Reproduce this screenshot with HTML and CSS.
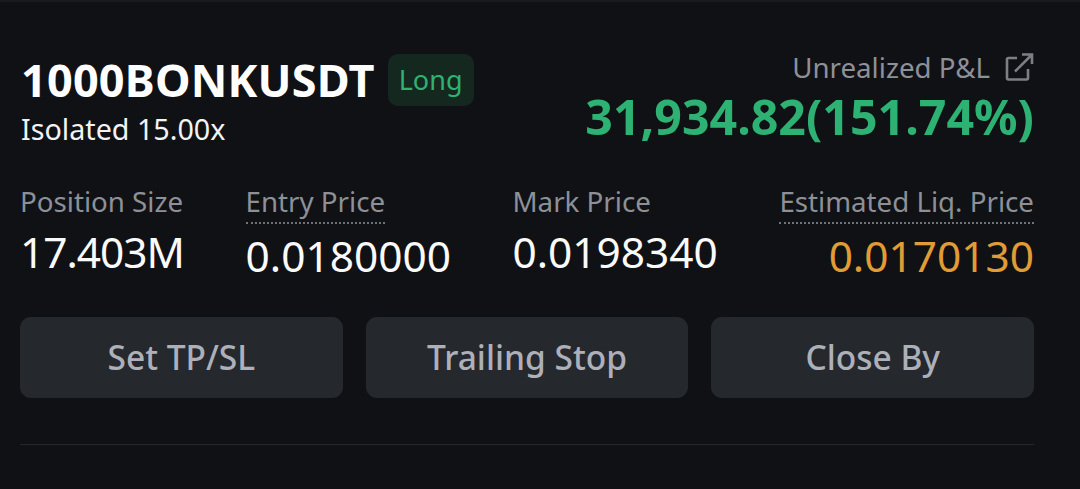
FILE: index.html
```html
<!DOCTYPE html>
<html>
<head>
<meta charset="utf-8">
<title>Position</title>
<link rel="stylesheet" href="styles.css">
</head>
<body>
<div class="card">
  <div class="head">
    <div class="symbol">
      <div class="symbol-row">
        <span class="name">1000BONKUSDT</span>
        <span class="tag">Long</span>
      </div>
      <div class="margin">Isolated 15.00x</div>
    </div>
    <div class="pnl">
      <div class="pnl-label">
        <span>Unrealized P&amp;L</span>
        <svg class="share" width="30" height="30" viewBox="0 0 30 30" fill="none" stroke="#7d7f85" stroke-width="2.600">
          <path d="M13 6H4.500A1.500 1.500 0 0 0 3 7.500V26A1.500 1.500 0 0 0 4.500 27.500H22.500A1.500 1.500 0 0 0 24 26V17"/>
          <path d="M11 19.500L27.500 3M18 2.500H28V12"/>
        </svg>
      </div>
      <div class="pnl-value">31,934.82(151.74%)</div>
    </div>
  </div>

  <div class="stats">
    <div class="stat">
      <div class="label">Position Size</div>
      <div class="value size">17.403M</div>
    </div>
    <div class="stat">
      <div class="label dotted">Entry Price</div>
      <div class="value">0.0180000</div>
    </div>
    <div class="stat">
      <div class="label">Mark Price</div>
      <div class="value">0.0198340</div>
    </div>
    <div class="stat right">
      <div class="label dotted">Estimated Liq. Price</div>
      <div class="value liq">0.0170130</div>
    </div>
  </div>

  <div class="actions">
    <button class="btn">Set TP/SL</button>
    <button class="btn">Trailing Stop</button>
    <button class="btn">Close By</button>
  </div>

  <div class="rule"></div>
</div>
</body>
</html>
```

FILE: styles.css
```css
html, body { margin: 0; padding: 0; height: 100%; }
body {
  background: #101115;
  color: #fff;
  font-family: "Noto Sans", Roboto, sans-serif;
  overflow: hidden;
}
.card {
  height: 489px;
  box-sizing: border-box;
  border-top: 2px solid #1a1b20;
  padding: 51px 46px 0 20px;
}
.head { display: flex; justify-content: space-between; height: 96px; }
.symbol { padding-left: 1px; }
.symbol-row { display: flex; align-items: center; gap: 13px; }
.name { font-size: 45px; font-weight: 700; line-height: 54px; letter-spacing: 0.2px; white-space: nowrap; }
.tag {
  background: #15281f;
  color: #2fb170;
  border-radius: 10px;
  font-size: 27px;
  line-height: 52px;
  padding: 0 11px;
}
.margin { font-size: 28.700px; line-height: 34px; margin-top: 5px; color: #f3f3f4; white-space: nowrap; }
.pnl { text-align: right; }
.pnl-label {
  display: flex;
  justify-content: flex-end;
  align-items: center;
  gap: 14px;
  height: 28px;
  color: #8e9097;
  font-size: 27.700px;
  line-height: 28px;
}
.pnl-value { color: #2eb273; font-size: 48.300px; font-weight: 700; line-height: 56px; margin-top: 7px; white-space: nowrap; }
.stats { display: flex; justify-content: space-between; margin-top: 35px; height: 133px; }
.stat { display: flex; flex-direction: column; align-items: flex-start; }
.stat.right { align-items: flex-end; }
.label { color: #8e9097; font-size: 27.700px; line-height: 34px; white-space: nowrap; }
.label.dotted { border-bottom: 2px dotted #70727a; padding-bottom: 4px; }
.value { font-size: 42.400px; line-height: 48px; margin-top: 10px; color: #fafafa; }
.value.size { letter-spacing: -1px; }
.dotted + .value { margin-top: 8px; }
.value.liq { color: #e09c35; }
.actions { display: flex; gap: 23px; }
.btn {
  flex: 1;
  height: 81px;
  padding: 0 0 2px;
  background: #25282d;
  border: 0;
  border-radius: 11px;
  color: #adb0b9;
  font-family: inherit;
  font-size: 33.500px;
  font-weight: 500;
}
.rule { height: 1px; background: #26272c; margin-top: 46px; }
```
